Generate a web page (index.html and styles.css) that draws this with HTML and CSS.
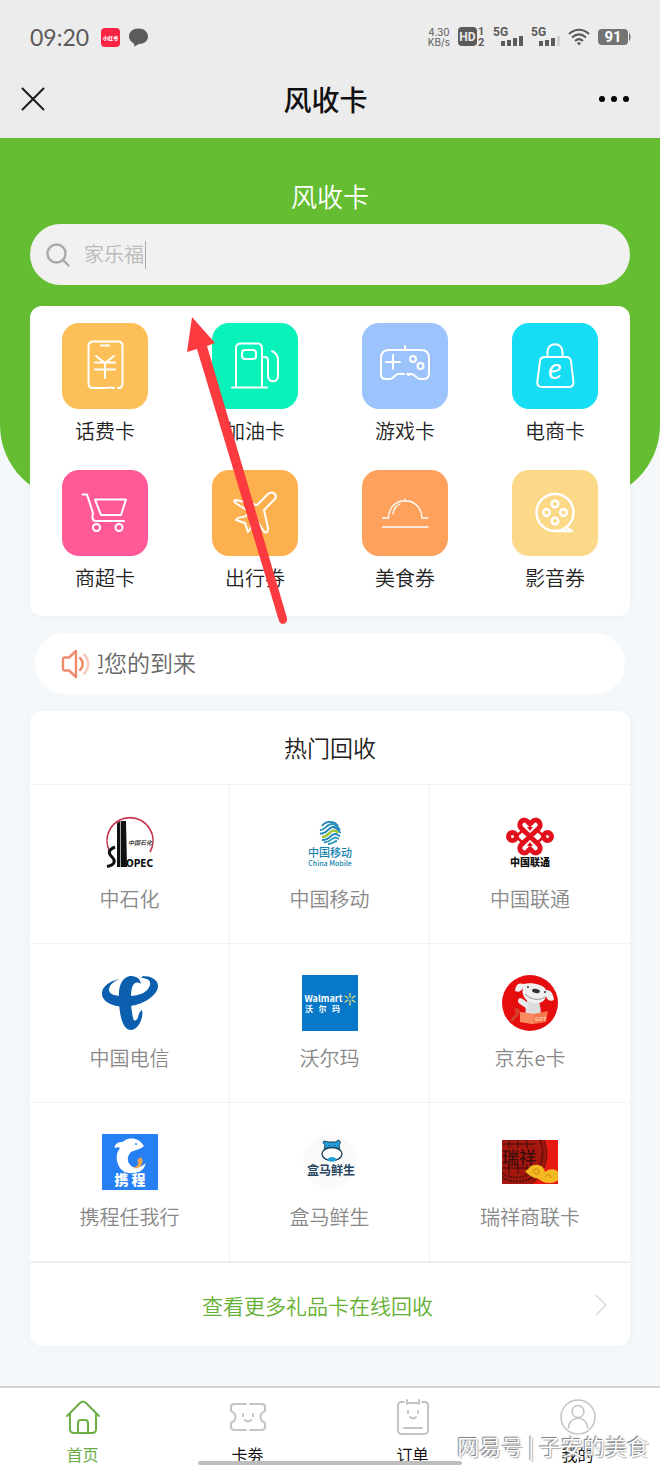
FILE: index.html
```html
<!DOCTYPE html>
<html lang="zh-CN">
<head>
    <meta charset="UTF-8">
    <meta name="viewport" content="width=device-width, initial-scale=1.0">
    <title>风收卡</title>
    <link rel="stylesheet" href="styles.css">
</head>
<body>
    <header class="top">
        <div class="status-bar">
            <span class="clock">09:20</span>
            <svg class="app-badge" width="19" height="19" viewBox="0 0 19 19">
                <rect width="19" height="19" rx="4" fill="#fb2343"/>
                <text x="9.5" y="12" font-size="5" font-weight="900" fill="#fff" text-anchor="middle">小红书</text>
            </svg>
            <svg width="19" height="19" viewBox="0 0 19 19" fill="#5c5a5a">
                <path d="M9.500 0.500C15 .5 19 4 19 8.500S15 16 10 16C8.500 16.500 7 18 5 18.500C5.500 17 5.500 16 4.500 15.200C1.500 13.500 0 11.500 0 8.500C0 4 4 .5 9.500 .5Z"/>
            </svg>
            <div class="status-right">
                <span class="speed">4.30<br>KB/s</span>
                <svg width="27" height="22" viewBox="0 0 27 22" fill="#5c5a5a">
                    <rect y="1" width="19" height="19" rx="4"/>
                    <text x="9.500" y="15" font-size="12" font-weight="700" fill="#ececec" text-anchor="middle">HD</text>
                    <text x="20" y="9" font-size="11" font-weight="700">1</text>
                    <text x="20" y="20" font-size="11" font-weight="700">2</text>
                </svg>
                <svg width="30" height="22" viewBox="0 0 30 22" fill="#5c5a5a">
                    <text x="0" y="10" font-size="12" font-weight="700">5G</text>
                    <path d="M8 15h4v5h-4zM14 14h4v6h-4zM20 12h4v8h-4zM26 10h4v10h-4z"/>
                </svg>
                <svg width="29" height="22" viewBox="0 0 29 22" fill="#5c5a5a">
                    <text x="0" y="10" font-size="12" font-weight="700">5G</text>
                    <path d="M8 15h4v5h-4zM14 14h4v6h-4zM20 12h4v8h-4z"/>
                    <path d="M26 10h3v10h-3z" fill="#d2d2d2"/>
                </svg>
                <svg width="22" height="18" viewBox="0 0 22 18" fill="none" stroke="#5c5a5a" stroke-width="2">
                    <path d="M1 6C7 .2 15 .2 21 6M4 9.500C8.500 5.500 13.500 5.500 18 9.500M7 13C9.500 10.600 12.500 10.600 15 13"/>
                    <path d="M8.800 15C10.200 14 11.800 14 13.200 15L11 17.500Z" fill="#5c5a5a" stroke="none"/>
                </svg>
                <svg width="33" height="18" viewBox="0 0 33 18">
                    <rect y="1" width="30" height="16" rx="4" fill="#747474"/>
                    <path d="M31 5C33 6 33 12 31 13Z" fill="#747474"/>
                    <text x="15" y="14" font-size="15" font-weight="700" fill="#fff" text-anchor="middle">91</text>
                </svg>
            </div>
        </div>
        <div class="nav-bar">
            <button class="icon-btn" aria-label="关闭">
                <svg width="24" height="24" viewBox="0 0 24 24" fill="none" stroke="#1c1c1c" stroke-width="2" stroke-linecap="round"><path d="M1.500 1.500L22.500 22.500M22.500 1.500L1.500 22.500"/></svg>
            </button>
            <h1>风收卡</h1>
            <button class="icon-btn" aria-label="更多">
                <svg width="32" height="8" viewBox="0 0 32 8"><circle cx="4" cy="4" r="3"/><circle cx="16" cy="4" r="3"/><circle cx="28" cy="4" r="3"/></svg>
            </button>
        </div>
    </header>

    <section class="hero">
        <h2>风收卡</h2>
        <label class="search">
            <svg width="24" height="24" viewBox="0 0 24 24" fill="none" stroke="#a9a9a9" stroke-width="2.400" stroke-linecap="round"><circle cx="10.500" cy="10.500" r="9"/><path d="M17 17L22.500 22.500"/></svg>
            <input type="text" placeholder="家乐福" aria-label="搜索">
            <span class="caret"></span>
        </label>
    </section>

    <main>
        <section class="card categories">
            <a class="category" href="#">
                <svg class="tile gold" viewBox="0 0 86 86">
                    <path d="M52 65C49 63.500 47 65 43 65H31C28 65 26.500 63.500 26.500 60.500V23C26.500 20 28 18.500 31 18.500H56C59 18.500 60.500 20 60.500 23V60.500C60.500 63 59 65 56 65"/>
                    <path d="M39 22.500H47M34 33L43 40L52 33M33 39.500H53M33 46.500H53M43 40V55"/>
                </svg>
                <span>话费卡</span>
            </a>
            <a class="category" href="#">
                <svg class="tile mint" viewBox="0 0 86 86">
                    <path d="M24 64V25C24 22 26 20.500 29 20.500H45C48 20.500 50 22 50 25V64M20 64.500H55"/>
                    <rect x="30" y="27" width="14" height="9" rx="3"/>
                    <path d="M50 34H53C56 34 56 36 56 39V53C56 60 66 60 66 53V37C66 33 64 30 60 28"/>
                </svg>
                <span>加油卡</span>
            </a>
            <a class="category" href="#">
                <svg class="tile blue" viewBox="0 0 86 86">
                    <path d="M43 27V23M42 51H37C33 50 32 56 28 56H24C20 56 18.500 54 19 50V35C19 29 22 27 27 27H59C64 27 67 29 67 35V50C67 54 66 56 62 56H58C54 56 52 50 49 51H45L47 52"/>
                    <path d="M24 39H38M31 32V46"/>
                    <circle cx="51" cy="36" r="3"/><circle cx="58.500" cy="43" r="3"/>
                </svg>
                <span>游戏卡</span>
            </a>
            <a class="category" href="#">
                <svg class="tile cyan" viewBox="0 0 86 86">
                    <path d="M35.500 33V29C35.500 18.500 50.500 18.500 50.500 29V33M33 34H54C57 34 58.500 35 59 38L61.500 59C61.500 62.500 60 64 57 64H30C27 64 25 62.500 25.300 59L28 38C28.300 35 30 34 33 34Z"/>
                    <text x="43" y="56" font-size="29" font-weight="400" font-style="italic" text-anchor="middle">e</text>
                </svg>
                <span>电商卡</span>
            </a>
            <a class="category" href="#">
                <svg class="tile pink" viewBox="0 0 86 86">
                    <path d="M20.500 24.500H25L31 43C30 47 30 51 34 51H62M33 29.500H64L59 45H39Z"/>
                    <circle cx="34.500" cy="57.500" r="3.500"/><circle cx="57" cy="57.500" r="3.500"/>
                </svg>
                <span>商超卡</span>
            </a>
            <a class="category" href="#">
                <svg class="tile orange" viewBox="0 0 86 86">
                    <path d="M22 31C24 28 32 33 45 35L56 24C60 20.500 66 24 63 29L52 40L56 58C56.500 63 53 64 51 60L44 49L39 53V58L36 62L33 53L24 50C26 46 31 48 34 46L38 42L25 34Z"/>
                </svg>
                <span>出行券</span>
            </a>
            <a class="category" href="#">
                <svg class="tile peach" viewBox="0 0 86 86">
                    <path stroke-width="1.300" d="M20.500 48H26.500C27 25 59 25 60 48H66M43 31V29M20.500 57H66M31 44C32 38 34 36 38 34"/>
                </svg>
                <span>美食券</span>
            </a>
            <a class="category" href="#">
                <svg class="tile sand" viewBox="0 0 86 86">
                    <g stroke-width="2.400"><circle cx="43" cy="42.500" r="18.500"/><path d="M43 61H60L55 58"/>
                    <circle cx="43" cy="34" r="3.300"/><circle cx="34.500" cy="42.500" r="3.300"/><circle cx="51.500" cy="42.500" r="3.300"/><circle cx="43" cy="51" r="3.300"/></g>
                </svg>
                <span>影音券</span>
            </a>
        </section>

        <section class="notice">
            <svg width="30" height="30" viewBox="0 0 30 30" fill="none" stroke="#f08a6c" stroke-width="2.400" stroke-linejoin="round" stroke-linecap="round">
                <path d="M2 10C2 9 3 8.500 4 8.500H8L15 2V28L8 21.500H4C3 21.500 2 21 2 20Z"/>
                <path d="M19 9C22.500 12 22.500 18 19 21"/>
                <path d="M23 5.500C28.500 10 28.500 20 23 24.500" stroke="#f9c9bb"/>
            </svg>
            <p>欢迎您的到来</p>
        </section>

        <section class="card hot">
            <h3>热门回收</h3>
            <div class="brands">
                <a class="brand" href="#">
                    <svg viewBox="0 0 56 56">
                        <path d="M8 36A23 23 0 1 1 48 36" fill="none" stroke="#c6324a" stroke-width="1.600"/>
                        <path d="M15 7L18 5V51H15ZM19 5H24L25 51H19Z" fill="#111"/>
                        <path d="M18.500 5V51" stroke="#aaa"/>
                        <path d="M13 31C6 34 6 37 10 41C14 45 13 49 5 50.500" fill="none" stroke="#111" stroke-width="3"/>
                        <text x="26" y="29" font-size="6" font-weight="500" font-style="italic" fill="#111">中国石化</text>
                        <text class="condensed" x="24" y="51" font-size="10" font-weight="700" fill="#111">OPEC</text>
                    </svg>
                    <span>中石化</span>
                </a>
                <a class="brand" href="#">
                    <svg viewBox="0 0 56 56">
                        <g fill="none" stroke-width="1.800">
                            <path d="M20 10C24 4.500 32 4.500 36 10" stroke="#1c83bd"/>
                            <path d="M18 14C23 15 24 8 30 8C34 8 36 11 38 14" stroke="#2b94b9"/>
                            <path d="M18 17.500C25 18.500 26 11 31 11C35 11 36 14 38.500 17" stroke="#1c83bd"/>
                            <path d="M20 21C27 21 27 14.500 32 14.500C34 14.500 35 15.500 36 17" stroke="#9cc63d" stroke-width="2.600"/>
                            <path d="M20 24C29 24 28 18 33 18C35 18 37 20 38 20" stroke="#1c83bd"/>
                            <path d="M22 26.500C30 26 30 21 34 21.500L37 23M26 28C31 28 32 25 35 25" stroke="#2b94b9"/>
                        </g>
                        <text x="28" y="41" font-size="11" font-weight="500" fill="#1683ae" text-anchor="middle">中国移动</text>
                        <text x="28" y="50" font-size="7" font-weight="500" fill="#1683ae" text-anchor="middle">China Mobile</text>
                    </svg>
                    <span>中国移动</span>
                </a>
                <a class="brand" href="#">
                    <svg viewBox="0 0 56 56">
                        <g fill="none" stroke="#e2101c" stroke-width="5">
                            <circle cx="10.500" cy="20.500" r="4"/><circle cx="45.500" cy="20.500" r="4"/>
                            <path d="M28 20.500L19 12C15 7 22 1 26 6L28 8L30 6C34 1 41 7 37 12L28 20.500L19 29C15 34 22 40 26 35L28 33L30 35C34 40 41 34 37 29Z"/>
                            <path d="M14 20.500L20 15M14 20.500L20 26M42 20.500L36 15M42 20.500L36 26" stroke-width="2.500"/>
                        </g>
                        <path d="M25 11L28 15L31 11M25 30L28 26L31 30" fill="#e2101c"/>
                        <text x="28" y="50" font-size="10" font-weight="900" fill="#111" text-anchor="middle">中国联通</text>
                    </svg>
                    <span>中国联通</span>
                </a>
                <a class="brand" href="#">
                    <svg viewBox="0 0 56 56" fill="#0b5fae">
                        <path d="M18 4C6 6 -1 13 0 20C2 30 18 33 28 31C44 29 56 19 56 11C56 4 48 1 41 1L39 3C46 3 49 6 48 10C46 17 38 21 27 21C16 22 7 20 7 15C7 10 12 6 18 4Z"/>
                        <path d="M39 9C38 3 34 1 28 1C20 2 16 12 17 23C17 38 20 55 29 55C36 55 42 43 40 35C38 36 37 38 36 42C35 46 32 47 31 43C29 34 28 20 30 13C31 8 35 6 39 9Z"/>
                    </svg>
                    <span>中国电信</span>
                </a>
                <a class="brand" href="#">
                    <svg viewBox="0 0 56 56">
                        <rect width="56" height="56" fill="#0878c9"/>
                        <text x="2.500" y="27" font-size="9" font-weight="700" fill="#fff">Walmart</text>
                        <text x="3" y="37" font-size="8" font-weight="700" fill="#fff">沃&nbsp;&nbsp;&nbsp;尔&nbsp;&nbsp;&nbsp;玛</text>
                        <path d="M48 22V18.500M48 26V30M46 23L43 21M46 25L43 27M50 23L53 21M50 25L53 27" stroke="#e8dc7a" stroke-width="1.300" stroke-linecap="round"/>
                    </svg>
                    <span>沃尔玛</span>
                </a>
                <a class="brand" href="#">
                    <svg viewBox="0 0 56 56">
                        <circle cx="28" cy="28" r="28" fill="#e60d0f"/>
                        <path d="M25 25C23 34 23 39 25 41H38C40 37 38 32 37 26Z" fill="#ddd"/>
                        <path d="M26 29C23 24 17 21 16 25C15 29 21 30 25 34Z" fill="#e8e8e8"/>
                        <path d="M22 9C15 7 14 11 13 16C17 18 19 16 21 13C19 19 23 27 32 28C39 29 43 26 44 21C45 25 48 27 52 25C51 18 49 15 44 15C42 9 28 7 22 9Z" fill="#f0f0f0"/>
                        <ellipse cx="34" cy="16" rx="4" ry="2" transform="rotate(12 34 16)" fill="#333"/>
                        <path d="M23 19C29 25 37 26 43 22" fill="none" stroke="#999"/>
                        <circle cx="26" cy="12" r="1" fill="#333"/><circle cx="43" cy="17" r="1" fill="#333"/>
                        <path d="M18 37L32 39L46 36L44 47L31 49L18 47Z" fill="#f7774c"/>
                        <path d="M18 37L32 39L31 49L18 47Z" fill="#fb8b61"/>
                        <path d="M8 46C10 40 15 40 13 36C11 33 17 31 18 36C18 42 12 42 12 46Z" fill="#d63e2c"/>
                        <text x="33" y="46" font-size="5" font-weight="700" fill="#ffd0b8">GIFT</text>
                    </svg>
                    <span>京东e卡</span>
                </a>
                <a class="brand" href="#">
                    <svg viewBox="0 0 56 56">
                        <rect width="56" height="56" fill="#267ff3"/>
                        <path d="M42 12C38 6 34 4 28 4.500C24 5 23 7 20 8C17 8 13 9 12.500 14C15 13 17 13 18 14C15 18 14 22 15 27C17 36 23 40 31 39C38 39 43 35 43.500 29C40 33 36 34 31 33C25 30 24 23 29 18C33 16 39 15 42 12Z" fill="#fff"/>
                        <path d="M39 23C43 28 39 36 30 34C37 33 37 28 35 26Z" fill="#f0a34b"/>
                        <circle cx="34" cy="10" r="1" fill="#267ff3"/>
                        <text x="28" y="51" font-size="14" font-weight="900" fill="#fff" text-anchor="middle">携 程</text>
                    </svg>
                    <span>携程任我行</span>
                </a>
                <a class="brand" href="#">
                    <svg viewBox="0 0 56 56">
                        <circle cx="28" cy="28" r="27" fill="#fafafa"/>
                        <path d="M22 7C20 9 22 10 23 11L22 17H38L37 11C39 9 39 7 36 6L34 8H26Z" fill="#229dd8" stroke="#1b4057"/>
                        <ellipse cx="30" cy="20" rx="10" ry="6.500" fill="#fff" stroke="#1b4057" stroke-width="1.300"/>
                        <path d="M25 26C27 22 33 22 35 26C32 28 28 28 25 26Z" fill="#229dd8"/>
                        <path d="M27 11V12M33 11V12" stroke="#1b4057"/>
                        <text x="29" y="41" font-size="12" font-weight="700" fill="#24435e" text-anchor="middle">盒马鲜生</text>
                    </svg>
                    <span>盒马鲜生</span>
                </a>
                <a class="brand" href="#">
                    <svg viewBox="0 0 56 56">
                        <path d="M0 6H56V50H0Z" fill="#e71a12"/>
                        <path d="M0 6H42C48 22 44 40 30 50H0Z" fill="#a3170f"/>
                        <g fill="none" stroke="#5a120c"><path d="M38 6C44 20 40 36 26 46" stroke-width="2" stroke-dasharray="2 1"/><path d="M42 6C48 22 44 38 30 49"/><path d="M0 39C10 46 22 44 30 39M0 43C10 50 22 48 32 43" stroke-width="2" stroke-dasharray="2 1"/></g>
                        <text x="0" y="30" font-size="17" font-weight="500" fill="#3d0d0a">瑞祥</text>
                        <path d="M1 10H33M1 34H33M7 30V40M16 30V40M25 30V40M7 6V14M16 6V14M25 6V14" stroke="#3d0d0a"/>
                        <path d="M23 37C28 35 27 31 33 31C38 30 42 33 43 38C48 34 54 35 56 38V46C53 50 42 50 38 46C35 43 29 45 23 37Z" fill="#f4b820"/>
                        <path d="M31 38C31 34 37 34 37 38C37 41 32 41 33 38M43 43C46 39 50 41 48 44" fill="none" stroke="#c87d0e"/>
                    </svg>
                    <span>瑞祥商联卡</span>
                </a>
            </div>
            <a class="more" href="#">
                <span>查看更多礼品卡在线回收</span>
                <svg width="12" height="22" viewBox="0 0 12 22" fill="none" stroke="#d8d8d8" stroke-width="1.500"><path d="M1 1L11 11L1 21"/></svg>
            </a>
        </section>
    </main>

    <nav class="tab-bar">
        <a class="tab active" href="#">
            <svg viewBox="0 0 36 36"><path d="M2 17L15 4C17 2 19 2 21 4L34 17M5 15V30C5 33 6 34 9 34H27C30 34 31 33 31 30V15M13 34V24C13 22 14 21 16 21H20C22 21 23 22 23 24V34"/></svg>
            <span>首页</span>
        </a>
        <a class="tab" href="#">
            <svg viewBox="0 0 36 36" stroke-width="2"><path d="M16 5H4C2 5 1 6 1 8V12C7 15 7 21 1 24V28C1 30 2 31 4 31H16M20 5H32C34 5 35 6 35 8V12C29 15 29 21 35 24V28C35 30 34 31 32 31H20M13 15V17M23 15V17M15 21C17 23 19 23 21 21"/></svg>
            <span>卡劵</span>
        </a>
        <a class="tab" href="#">
            <svg viewBox="0 0 36 36" stroke-width="2"><path d="M9 3H6C4 3 3 4 3 7V31C3 34 4 35 7 35H29C32 35 33 34 33 31V7C33 4 32 3 30 3H27M12 1V5M24 1V5M12 4H24M13 12V14M23 12V14M15 18C17 20 19 20 21 18M9 29H27"/></svg>
            <span>订单</span>
        </a>
        <a class="tab" href="#">
            <svg viewBox="0 0 36 36" stroke-width="1.500"><circle cx="18" cy="18" r="17"/><circle cx="18" cy="12.500" r="6"/><path d="M8.500 29C8.500 16 27.500 16 27.500 29"/></svg>
            <span>我的</span>
        </a>
        <div class="home-line"></div>
        <div class="watermark">网易号 | 子安的美食</div>
    </nav>

    <svg class="arrow" width="110" height="310" viewBox="0 0 110 310" fill="#fb3b3f">
        <path d="M7 0L30 26L22 29L102 301C103 307 96 309 94 304L12 32L2 35Z"/>
    </svg>
</body>
</html>
```
FILE: styles.css
```css
* {
    box-sizing: border-box;
}

body {
    margin: 0;
    position: relative;
    background-color: #f4f8fa;
    font-family: "Noto Sans CJK SC", sans-serif;
    font-weight: 350;
    color: #222;
}

h1, h2, h3, p {
    margin: 0;
}

a {
    color: inherit;
    text-decoration: none;
}

svg {
    display: block;
    flex-shrink: 0;
}

/* status bar and title */
.top {
    background-color: #ececec;
    height: 138px;
}

.status-bar {
    display: flex;
    align-items: center;
    gap: 9px;
    height: 74px;
    padding: 0 29px 0 30px;
    font-family: Roboto, "Noto Sans CJK SC", sans-serif;
    color: #5c5a5a;
}

.clock {
    font-family: Lato, sans-serif;
    font-size: 23px;
    font-weight: 400;
    margin-right: 3px;
}

.app-badge {
    font-family: "Noto Sans CJK SC", sans-serif;
}

.status-right {
    display: flex;
    align-items: center;
    gap: 8px;
    margin-left: auto;
}

.speed {
    font-family: Inter, sans-serif;
    font-size: 10px;
    font-weight: 400;
    line-height: 10px;
    text-align: center;
}

.nav-bar {
    display: flex;
    align-items: center;
    justify-content: space-between;
    height: 50px;
    padding: 0 30px 0 21px;
}

.nav-bar h1 {
    font-size: 28px;
    font-weight: 500;
    line-height: 40px;
    color: #111;
}

.icon-btn {
    display: flex;
    width: 32px;
    padding: 0;
    border: none;
    background: none;
}

/* green area */
.hero {
    height: 362px;
    margin-bottom: -194px;
    padding: 38px 30px 0;
    background-color: #65bd32;
    border-radius: 0 0 75px 75px;
}

.hero h2 {
    font-size: 26px;
    font-weight: 350;
    line-height: 40px;
    text-align: center;
    color: #fff;
}

.search {
    display: flex;
    align-items: center;
    height: 61px;
    margin-top: 8px;
    padding: 0 16px;
    border-radius: 31px;
    background-color: #f1f1f2;
}

.search input {
    width: 61px;
    height: 32px;
    margin-left: 14px;
    padding: 0 0 2px;
    border: none;
    outline: none;
    background: none;
    font: inherit;
    font-size: 20px;
}

.search input::placeholder {
    color: #b9b9b9;
}

.caret {
    width: 1px;
    height: 28px;
    background-color: #aaa;
}

main {
    padding: 0 30px 40px;
}

.card {
    background-color: #fff;
    border-radius: 12px;
    box-shadow: 0 0 10px rgba(90, 120, 140, 0.06);
}

/* categories */
.categories {
    position: relative;
    display: grid;
    grid-template-columns: repeat(4, 1fr);
    row-gap: 17px;
    padding: 17px 0 16px;
}

.category {
    display: flex;
    flex-direction: column;
    align-items: center;
    height: 130px;
    font-size: 20px;
    line-height: 44px;
}

.tile {
    width: 86px;
    height: 86px;
    border-radius: 17px;
    fill: none;
    stroke: #fff;
    stroke-width: 2;
    stroke-linecap: round;
    stroke-linejoin: round;
}

.tile text {
    font-family: Lato, sans-serif;
    fill: #fff;
    stroke: none;
}

.gold {
    background-color: #fdc058;
}

.mint {
    background-color: #08f2b9;
}

.blue {
    background-color: #9dc3fd;
}

.cyan {
    background-color: #16ddf3;
}

.pink {
    background-color: #ff5a97;
}

.orange {
    background-color: #fdb04e;
}

.peach {
    background-color: #fda15c;
}

.sand {
    background-color: #fcd988;
}

/* notice */
.notice {
    display: flex;
    align-items: center;
    gap: 7px;
    height: 61px;
    margin: 17px 5px;
    padding: 0 26px;
    border-radius: 31px;
    background-color: #fff;
}

.notice p {
    overflow: hidden;
    white-space: nowrap;
    text-indent: -40px;
    font-size: 23px;
    line-height: 32px;
    padding-bottom: 3px;
    color: #666;
}

/* hot brands */
.hot h3 {
    font-size: 23px;
    font-weight: 350;
    line-height: 73px;
    text-align: center;
}

.brands {
    display: grid;
    grid-template-columns: repeat(3, 1fr);
}

.brand {
    display: flex;
    flex-direction: column;
    align-items: center;
    gap: 8px;
    height: 159px;
    padding-top: 31px;
    border-top: 1px solid #f3f3f3;
    font-size: 20px;
    line-height: 38px;
    color: #888;
}

.brand:not(:nth-child(3n)) {
    border-right: 1px solid #f3f3f3;
}

.brand svg {
    width: 56px;
    height: 56px;
}

.condensed {
    font-family: "DejaVu Sans Condensed", "DejaVu Sans", sans-serif;
}

.more {
    display: flex;
    align-items: center;
    height: 85px;
    padding-right: 23px;
    border-top: 2px solid #eee;
    font-size: 21px;
    color: #65b033;
}

.more span {
    flex: 1;
    padding-left: 10px;
    text-align: center;
}

/* bottom tabs */
.tab-bar {
    position: relative;
    display: flex;
    height: 81px;
    border-top: 2px solid #d2d2d2;
    background-color: #fff;
}

.tab {
    flex: 1;
    display: flex;
    flex-direction: column;
    align-items: center;
    padding-top: 11px;
    font-size: 16px;
    font-weight: 400;
    line-height: 24px;
    color: #111;
}

.tab svg {
    width: 36px;
    height: 36px;
    margin-bottom: 7px;
    fill: none;
    stroke: #c4c4c4;
    stroke-linecap: round;
    stroke-linejoin: round;
}

.tab.active {
    color: #6cae45;
}

.tab.active svg {
    stroke: #6cae45;
    stroke-width: 2;
}

.home-line {
    position: absolute;
    left: 30%;
    right: 30%;
    bottom: 2px;
    height: 4px;
    border-radius: 2px;
    background-color: #bdbdbd;
}

.watermark {
    position: absolute;
    right: 11px;
    bottom: 6px;
    font-size: 22px;
    line-height: 32px;
    color: #fff;
    text-shadow: -1px -1px 1px #777, 1px 1px 1px #aaa;
}

.arrow {
    position: absolute;
    top: 317px;
    left: 185px;
}
```
